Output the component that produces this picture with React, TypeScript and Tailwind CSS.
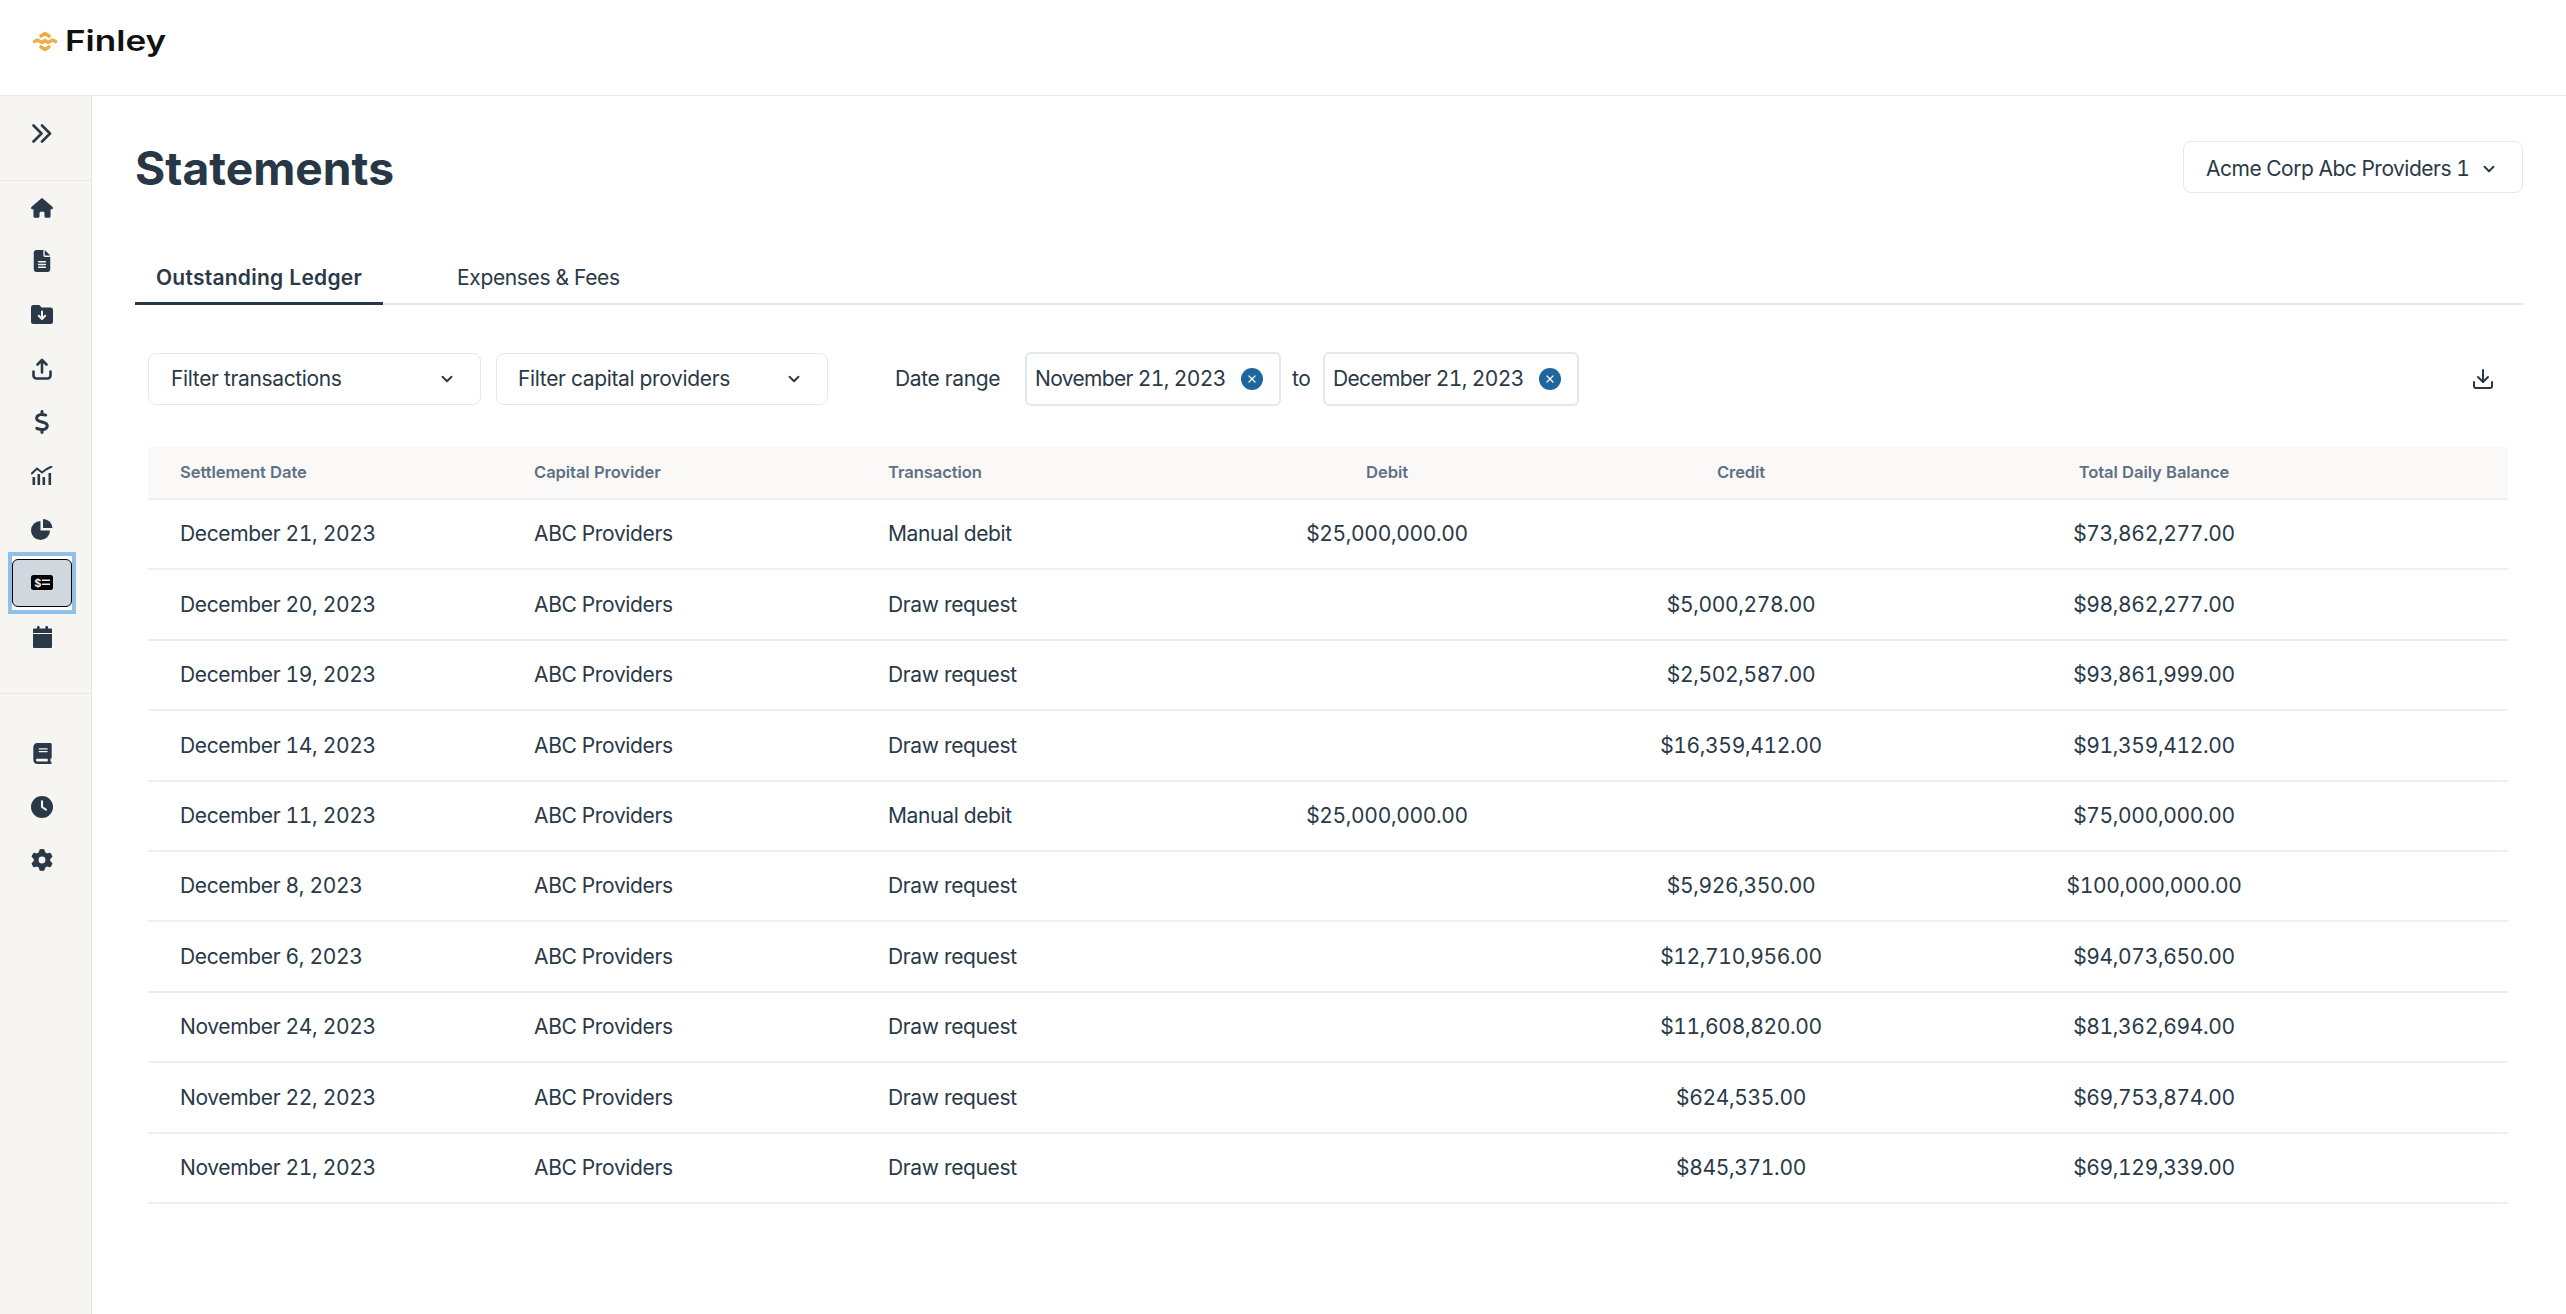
import React from 'react';
import { FaHouse, FaFileLines, FaDollarSign, FaBook, FaClock, FaGear } from 'react-icons/fa6';
import { ChevronDown, Download, X } from 'lucide-react';

const rows = [
    ['December 21, 2023', 'Manual debit', '$25,000,000.00', '', '$73,862,277.00'],
    ['December 20, 2023', 'Draw request', '', '$5,000,278.00', '$98,862,277.00'],
    ['December 19, 2023', 'Draw request', '', '$2,502,587.00', '$93,861,999.00'],
    ['December 14, 2023', 'Draw request', '', '$16,359,412.00', '$91,359,412.00'],
    ['December 11, 2023', 'Manual debit', '$25,000,000.00', '', '$75,000,000.00'],
    ['December 8, 2023', 'Draw request', '', '$5,926,350.00', '$100,000,000.00'],
    ['December 6, 2023', 'Draw request', '', '$12,710,956.00', '$94,073,650.00'],
    ['November 24, 2023', 'Draw request', '', '$11,608,820.00', '$81,362,694.00'],
    ['November 22, 2023', 'Draw request', '', '$624,535.00', '$69,753,874.00'],
    ['November 21, 2023', 'Draw request', '', '$845,371.00', '$69,129,339.00'],
];

const DoubleChevron = () => (
    <svg width="20" height="19" viewBox="0 0 20 19" fill="none" stroke="#2a3947" strokeWidth="2.600" strokeLinecap="round" strokeLinejoin="round">
        <path d="M1.500 1.500l8 8-8 8M10 1.500l8 8-8 8" />
    </svg>
);

const FolderDown = () => (
    <svg width="22" height="19" viewBox="0 0 22 19">
        <path fill="#2a3947" d="M2.500 0h5.800l2.400 2.400h8.800A2.500 2.500 0 0 1 22 4.900v11.600a2.500 2.500 0 0 1-2.500 2.500h-17A2.500 2.500 0 0 1 0 16.500v-14A2.500 2.500 0 0 1 2.500 0z" />
        <path fill="none" stroke="#f6f5f1" strokeWidth="2" strokeLinecap="round" strokeLinejoin="round" d="M11 6.500v7M7.800 10.800 11 14l3.200-3.200" />
    </svg>
);

const Upload = () => (
    <svg width="20" height="22" viewBox="0 0 20 22" fill="none" stroke="#2a3947" strokeWidth="2.600" strokeLinecap="round" strokeLinejoin="round">
        <path d="M10 14.500V2M5.500 6.500 10 2l4.500 4.500" />
        <path d="M1.500 13.500v4a3 3 0 0 0 3 3h11a3 3 0 0 0 3-3v-4" />
    </svg>
);

const ChartLine = () => (
    <svg width="22" height="19" viewBox="0 0 22 19" fill="#2a3947">
        <path d="M.800 7.500 6 2.500l5 4 4-3 5.500-3" fill="none" stroke="#2a3947" strokeWidth="2" strokeLinecap="round" strokeLinejoin="round" />
        <rect x="1.500" y="11" width="2.600" height="8" rx=".6" />
        <rect x="6.500" y="8" width="2.600" height="11" rx=".6" />
        <rect x="11.500" y="11" width="2.600" height="8" rx=".6" />
        <rect x="17.500" y="7" width="2.600" height="12" rx=".6" />
    </svg>
);

const Pie = () => (
    <svg width="22" height="21" viewBox="0 0 22 21" fill="#2a3947">
        <path d="M9.500 2v9.500H19A9.500 9.500 0 1 1 9.500 2z" />
        <path d="M12 0a9.500 9.500 0 0 1 9.500 9H12z" />
    </svg>
);

const Calendar = () => (
    <svg width="19" height="22" viewBox="0 0 19 22" fill="#2a3947">
        <rect x="4" y="0" width="2.600" height="4" rx="1" />
        <rect x="12.400" y="0" width="2.600" height="4" rx="1" />
        <path d="M1 2.500h17a1 1 0 0 1 1 1V7H0V3.500a1 1 0 0 1 1-1z" />
        <path d="M0 8h19v13a1 1 0 0 1-1 1H1a1 1 0 0 1-1-1z" />
    </svg>
);

const MoneyCard = () => (
    <svg width="22" height="15" viewBox="0 0 22 15">
        <rect width="22" height="15" rx="2.500" fill="#000" />
        <text x="3.200" y="11.500" fontFamily="Inter, sans-serif" fontWeight="700" fontSize="11" fill="#e8edf0">$</text>
        <path d="M11 5.200h8M11 9.300h8" stroke="#e8edf0" strokeWidth="1.600" />
    </svg>
);

const Logo = () => (
    <svg width="26" height="21" viewBox="0 0 26 21" fill="none" stroke="#ecae45" strokeWidth="3.600" strokeLinecap="round" strokeLinejoin="round">
        <path d="M9 5 13 2.500 17 5" />
        <path d="M2.500 10.500 5.500 9 10 11.500 13 9.500 16 11.500 20.500 9 23.500 10.500" />
        <path d="M9 16 13 18.500 17 16" />
    </svg>
);

const navItem = 'flex h-[53.6px] items-center justify-center pr-[7px] text-[#2a3947]';

const Select = ({ label, className }: { label: string; className: string }) => (
    <button className={`flex h-[52px] items-center justify-between whitespace-nowrap rounded-lg border border-[#e2e8f0] bg-white text-[21px] text-[#2a3947] tabular-nums ${className}`}>
        <span>{label}</span>
        <ChevronDown size={18} strokeWidth={2.5} />
    </button>
);

const DateBox = ({ value }: { value: string }) => (
    <div className="flex h-[54px] w-[256px] items-center justify-between rounded-md border-2 border-[#e2e8f0] pl-[8px] pr-[16px]">
        <span className="tracking-[-0.65px]">{value}</span>
        <span className="flex h-[22px] w-[22px] items-center justify-center rounded-full bg-[#1f66a1] text-white">
            <X size={12} strokeWidth={2.5} />
        </span>
    </div>
);

const App: React.FC = () => {
    return (
        <div className="flex h-screen flex-col overflow-hidden bg-white font-['Inter',sans-serif] text-[21px] tracking-[-0.35px] text-[#2a3947] tabular-nums">
            <header className="flex h-[96px] items-start gap-[7px] border-b border-[#e2e8f0] pl-[32px] pt-[31px]">
                <Logo />
                <span className="mt-[-7px] origin-left scale-x-[1.23] text-[28.5px] font-semibold leading-[34px] tracking-normal text-[#111]">Finley</span>
            </header>

            <div className="flex flex-1">
                <aside className="w-[92px] border-r border-[#e6e6e4] bg-[#f6f5f1]">
                    <div className="flex h-[85px] items-start justify-center border-b border-[#e8e8e4] pr-[7px] pt-[28px]">
                        <DoubleChevron />
                    </div>
                    <nav className="border-b border-[#e8e8e4] pb-[30px]">
                        <div className={navItem}><FaHouse size={22} /></div>
                        <div className={navItem}><FaFileLines size={22} /></div>
                        <div className={navItem}><FolderDown /></div>
                        <div className={navItem}><Upload /></div>
                        <div className={navItem}><FaDollarSign size={24} /></div>
                        <div className={navItem}><ChartLine /></div>
                        <div className={navItem}><Pie /></div>
                        <div className={navItem}>
                            <div className="flex h-[54px] w-[60px] items-center bg-white outline-4 outline-[#90bfe8]">
                                <div className="flex h-[48px] w-full items-center justify-center rounded-md border border-black bg-[#cfd8df]">
                                    <MoneyCard />
                                </div>
                            </div>
                        </div>
                        <div className={navItem}><Calendar /></div>
                    </nav>
                    <div className="pt-[32px]">
                        <div className={navItem}><FaBook size={21} /></div>
                        <div className={navItem}><FaClock size={22} /></div>
                        <div className={navItem}><FaGear size={22} /></div>
                    </div>
                </aside>

                <main className="flex-1 pl-[43px] pr-[43px]">
                    <div className="flex items-start justify-between pt-[45px]">
                        <h1 className="mt-[-2px] text-[46.2px] font-bold leading-[58px] tracking-normal text-[#283745]">Statements</h1>
                        <Select label="Acme Corp Abc Providers 1" className="w-[340px] pl-[22px] pr-[24px] pt-[3px] tracking-[-0.5px]" />
                    </div>

                    <div className="mt-[55px] flex h-[53px] border-b-2 border-[#e2e6ea]">
                        <div className="h-[53px] w-[248px] border-b-[3px] border-[#283745] pt-[10px] text-center font-semibold tracking-[0.25px]">Outstanding Ledger</div>
                        <div className="ml-[74px] pt-[10px]">Expenses &amp; Fees</div>
                    </div>

                    <div className="ml-[13px] mr-[15px] mt-[47px] flex h-[54px] items-center">
                        <Select label="Filter transactions" className="w-[333px] pl-[22px] pr-[24px]" />
                        <Select label="Filter capital providers" className="ml-[15px] w-[332px] pl-[21px] pr-[24px]" />
                        <span className="ml-[67px] mr-[24px] w-[106px] whitespace-nowrap">Date range</span>
                        <DateBox value="November 21, 2023" />
                        <span className="mx-[11px] w-[20px]">to</span>
                        <DateBox value="December 21, 2023" />
                        <Download size={24} className="ml-auto mr-[13px]" />
                    </div>

                    <table className="ml-[13px] mt-[41px] w-[2360px] table-fixed border-collapse">
                        <thead>
                            <tr className="h-[52px] border-b-2 border-[#edf0f3] bg-[#faf9f7] text-[16.6px] tracking-[-0.1px] text-[#5f7183]">
                                <th className="w-[15%] pl-[32px] text-left font-semibold">Settlement Date</th>
                                <th className="w-[15%] pl-[32px] text-left font-semibold">Capital Provider</th>
                                <th className="w-[15%] pl-[32px] text-left font-semibold">Transaction</th>
                                <th className="w-[15%] font-semibold">Debit</th>
                                <th className="w-[15%] font-semibold">Credit</th>
                                <th className="w-[20%] font-semibold">Total Daily Balance</th>
                                <th className="w-[5%]"></th>
                            </tr>
                        </thead>
                        <tbody>
                            {rows.map((row) => (
                                <tr key={row[0]} className="h-[70.4px] border-b-2 border-[#edf0f3]">
                                    <td className="pl-[32px]">{row[0]}</td>
                                    <td className="pl-[32px]">ABC Providers</td>
                                    <td className="pl-[32px]">{row[1]}</td>
                                    <td className="text-center">{row[2]}</td>
                                    <td className="text-center">{row[3]}</td>
                                    <td className="text-center">{row[4]}</td>
                                    <td></td>
                                </tr>
                            ))}
                        </tbody>
                    </table>
                </main>
            </div>
        </div>
    );
};

export default App;
